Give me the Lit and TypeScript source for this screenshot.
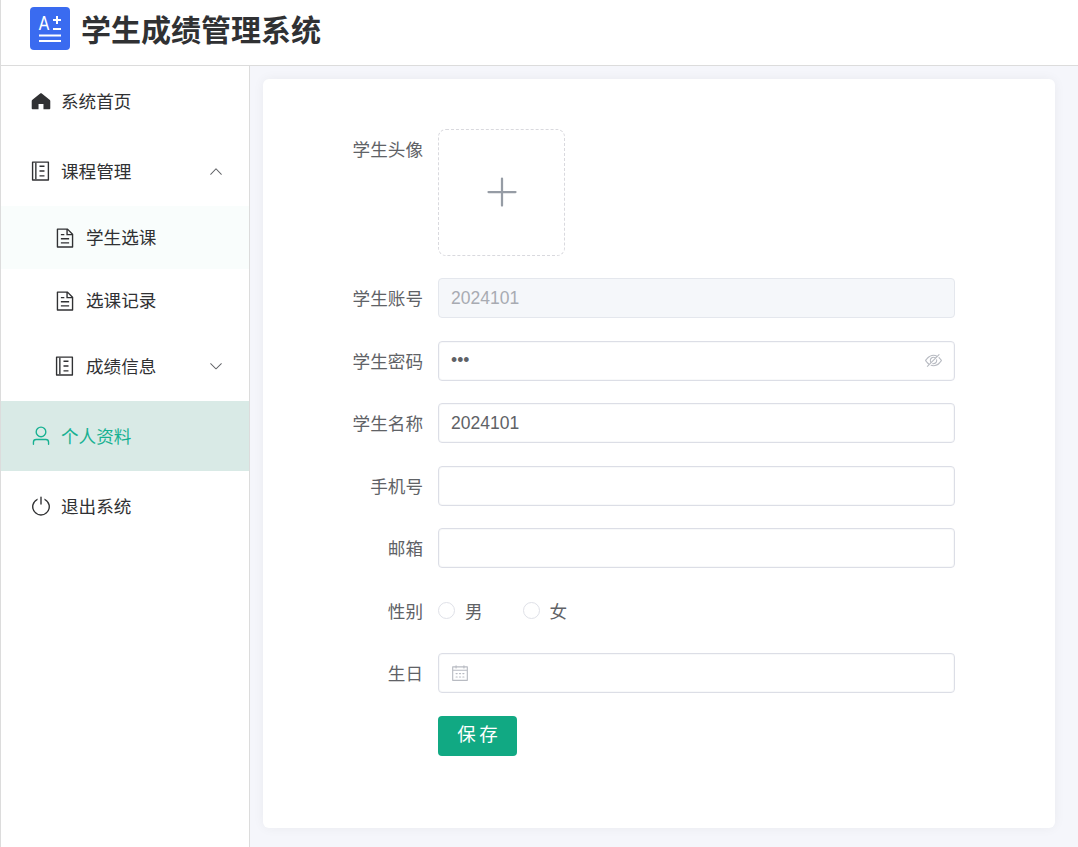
import { LitElement, html, css, svg } from "lit";
import { customElement } from "lit/decorators.js";

const P: Record<string, any> = {
  plus: svg`<path d="M480 480V128a32 32 0 0 1 64 0v352h352a32 32 0 1 1 0 64H544v352a32 32 0 1 1-64 0V544H128a32 32 0 0 1 0-64h352z"/>`,
  up: svg`<path d="M488.832 344.32l-339.84 356.672a32 32 0 0 0 0 44.16l.384.384a29.44 29.44 0 0 0 42.688 0l320-335.872 319.872 335.872a29.44 29.44 0 0 0 42.688 0l.384-.384a32 32 0 0 0 0-44.16L535.168 344.32a32 32 0 0 0-46.336 0z"/>`,
  down: svg`<path d="M831.872 340.864 512 652.672 192.128 340.864a30.592 30.592 0 0 0-42.752 0 29.12 29.12 0 0 0 0 41.6L489.664 714.24a32 32 0 0 0 44.672 0l340.288-331.712a29.12 29.12 0 0 0 0-41.728 30.592 30.592 0 0 0-42.752 0z"/>`,
  doc: svg`<path d="M832 384H576V128H192v768h640V384zm-26.496-64L640 154.496V320h165.504zM160 64h480l256 256v608a32 32 0 0 1-32 32H160a32 32 0 0 1-32-32V96a32 32 0 0 1 32-32zm160 448h384v64H320v-64zm0-192h160v64H320v-64zm0 384h384v64H320v-64z"/>`,
  book: svg`<path d="M120 64h736a32 32 0 0 1 32 32v832a32 32 0 0 1-32 32H120a32 32 0 0 1-32-32V96a32 32 0 0 1 32-32zm32 64v768h672V128H152z"/><path d="M240 128h64v768h-64zM442 256h232v64H442zM442 480h232v64H442zM442 704h232v64H442z"/>`,
  home: svg`<path d="M512 150c-14 0-27 5-38 14L100 470c-12 10-20 24-20 40v340c0 28 22 50 50 50h267V650h230v250h267c28 0 50-22 50-50V510c0-16-8-30-20-40L550 164c-11-9-24-14-38-14z"/>`,
  user: svg`<path d="M512 512a192 192 0 1 0 0-384 192 192 0 0 0 0 384zm0 64a256 256 0 1 1 0-512 256 256 0 0 1 0 512zm320 320v-96a96 96 0 0 0-96-96H288a96 96 0 0 0-96 96v96a32 32 0 1 1-64 0v-96a160 160 0 0 1 160-160h448a160 160 0 0 1 160 160v96a32 32 0 1 1-64 0z"/>`,
  power: svg`<path d="M352 159.872V230.4a352 352 0 1 0 320 0v-70.528A416.128 416.128 0 0 1 512 960a416 416 0 0 1-160-800.128z"/><path d="M512 64q32 0 32 32v320q0 32-32 32t-32-32V96q0-32 32-32z"/>`,
  hide: svg`<path d="M876.8 156.8c0-9.6-3.2-16-9.6-22.4-6.4-6.4-12.8-9.6-22.4-9.6-9.6 0-16 3.2-22.4 9.6L736 220.8c-64-32-137.6-51.2-224-60.8-160 16-288 73.6-377.6 176C44.8 438.4 0 496 0 512s48 73.6 134.4 176c22.4 25.6 44.8 48 73.6 67.2l-86.4 89.6c-6.4 6.4-9.6 12.8-9.6 22.4 0 9.6 3.2 16 9.6 22.4 6.4 6.4 12.8 9.6 22.4 9.6 9.6 0 16-3.2 22.4-9.6l704-710.4c3.2-6.4 6.4-12.8 6.4-22.4Zm-646.4 528c-76.8-70.4-128-128-153.6-172.8 28.8-48 80-105.6 153.6-172.8C304 272 400 230.4 512 224c64 3.2 124.8 19.2 176 44.8l-54.4 54.4C598.4 300.8 560 288 512 288c-64 0-115.2 22.4-160 64s-64 96-64 160c0 48 12.8 89.6 35.2 124.8L256 707.2c-9.6-6.4-19.2-16-25.6-22.4Zm140.8-96c-12.8-22.4-19.2-48-19.2-76.8 0-44.8 16-83.2 48-112 32-28.8 67.2-48 112-48 28.8 0 54.4 6.4 73.6 19.2L371.2 588.8ZM889.6 336c-12.8-16-28.8-28.8-41.6-41.6l-48 48c73.6 67.2 124.8 124.8 150.4 169.6-28.8 48-80 105.6-153.6 172.8-73.6 67.2-172.8 108.8-284.8 115.2-51.2-3.2-99.2-12.8-140.8-28.8l-48 48c57.6 22.4 118.4 38.4 188.8 44.8 160-16 288-73.6 377.6-176C979.2 585.6 1024 528 1024 512s-48-73.6-134.4-176Z"/><path d="M511.998 672c-12.8 0-25.6-3.2-38.4-6.4l-51.2 51.2c28.8 12.8 57.6 19.2 89.6 19.2 64 0 115.2-22.4 160-64 41.6-41.6 64-96 64-160 0-32-6.4-64-19.2-89.6l-51.2 51.2c3.2 12.8 6.4 25.6 6.4 38.4 0 44.8-16 83.2-48 112-32 28.8-67.2 48-112 48Z"/>`,
  cal: svg`<path d="M128 384v512h768V192H768v32a32 32 0 1 1-64 0v-32H320v32a32 32 0 0 1-64 0v-32H128v128h768v64H128zm192-256h384V96a32 32 0 1 1 64 0v32h160a32 32 0 0 1 32 32v768a32 32 0 0 1-32 32H96a32 32 0 0 1-32-32V160a32 32 0 0 1 32-32h160V96a32 32 0 0 1 64 0v32zm-32 384h64a32 32 0 0 1 0 64h-64a32 32 0 0 1 0-64zm0 192h64a32 32 0 1 1 0 64h-64a32 32 0 1 1 0-64zm192-192h64a32 32 0 0 1 0 64h-64a32 32 0 0 1 0-64zm0 192h64a32 32 0 1 1 0 64h-64a32 32 0 1 1 0-64zm192-192h64a32 32 0 1 1 0 64h-64a32 32 0 1 1 0-64zm0 192h64a32 32 0 1 1 0 64h-64a32 32 0 1 1 0-64z"/>`,
};

const icon = (n: string, cls = "") =>
  html`<svg class="ic ${cls}" viewBox="0 0 1024 1024" fill="currentColor">${P[n]}</svg>`;

@customElement("app-root")
export class AppRoot extends LitElement {
  static styles = css`
    :host {
      display: block;
      height: 847px;
      overflow: hidden;
      font-family: "Liberation Sans", "Noto Sans CJK SC", sans-serif;
      font-size: 17.6px;
      color: #303133;
      background: #fff;
    }
    .ic { display: block; flex: none; }
    .header {
      height: 65px;
      border-bottom: 1px solid #dcdcdc;
      border-left: 1px solid #dcdcdc;
      padding-left: 29px;
      display: flex;
      align-items: center;
      gap: 11px;
    }
    .logo { display: block; width: 40px; height: 43px; margin-top: -8px; }
    .title { font-size: 30px; font-weight: 700; color: #303133; line-height: 1; margin-top: -4px; }
    .body { display: flex; height: 781px; }
    .side {
      width: 248px;
      flex: none;
      border-left: 1px solid #dcdcdc;
      border-right: 1px solid #dcdcdc;
    }
    .item {
      height: 70px;
      display: flex;
      align-items: center;
      padding-left: 29px;
      gap: 9px;
      color: #303133;
    }
    .item .ic { width: 22px; height: 22px; }
    .item .txt { padding-bottom: 2px; }
    .item .sp { flex: 1; }
    .item .ar { width: 16px; height: 16px; color: #606266; margin-right: 25px; }
    .subs { padding-bottom: 1px; }
    .sub { padding-left: 53px; gap: 10px; }
    .h63 { height: 63px; }
    .h68 { height: 68px; }
    .sub.hl { background: #f9fdfc; }
    .item.active { background: #d9eae6; color: #17b192; }
    .main {
      flex: 1;
      background: #f5f6fb;
      padding: 13px 23px 19px 13px;
      display: flex;
    }
    .card {
      flex: 1;
      background: #fff;
      border-radius: 6px;
      box-shadow: 0 0 12px rgba(0, 0, 0, 0.05);
      padding-top: 50px;
    }
    .form {
      display: grid;
      grid-template-columns: 160px 517px;
      column-gap: 15px;
      row-gap: 22.5px;
    }
    .lab {
      text-align: right;
      color: #606266;
      height: 40px;
      line-height: 42px;
    }
    .upload {
      width: 125px;
      height: 124.9px;
      border: 1px dashed #d9d9de;
      border-radius: 8px;
      display: flex;
      align-items: center;
      justify-content: center;
      color: #969ca5;
    }
    .upload .ic { width: 36px; height: 36px; }
    .field {
      height: 38px;
      border: 1px solid #dcdee6;
      box-shadow: inset 0 0 0 1px rgba(220, 223, 230, 0.2);
      border-radius: 4px;
      display: flex;
      align-items: center;
      padding: 0 12px;
      background: #fff;
      gap: 10px;
    }
    .field.dis { background: #f5f7fa; border-color: #e4e7ed; box-shadow: none; }
    .field input {
      flex: 1;
      min-width: 0;
      border: 0;
      outline: 0;
      padding: 0;
      background: transparent;
      font: inherit;
      font-size: 17.5px;
      color: #606266;
      height: 100%;
    }
    .field.dis input { color: #a8abb2; -webkit-text-fill-color: #a8abb2; }
    .field .ic { width: 17px; height: 17px; color: #b8bbc2; }
    .field .ic.cal { width: 18px; height: 18px; }
    .radios { display: flex; align-items: center; height: 40px; color: #606266; }
    .radio { display: flex; align-items: center; gap: 10px; margin-right: 40px; }
    .radio .rt { padding-bottom: 1px; }
    .dot {
      width: 17px;
      height: 17px;
      border: 1px solid #dfe1e8;
      border-radius: 50%;
      box-sizing: border-box;
      background: #fff;
    }
    .btn {
      width: 79px;
      height: 40px;
      border: 0;
      border-radius: 4px;
      background: #11a983;
      color: #fff;
      font: inherit;
      font-size: 18.5px;
      letter-spacing: 3.5px;
      padding: 0 0 6px 0;
      text-indent: 3.5px;
    }
  `;

  render() {
    const T = (s: string) => html`<span class="txt">${s}</span>`;
    return html`
      <div class="header">
        <svg class="logo" viewBox="0 0 40 43">
          <rect width="40" height="43" rx="4" fill="#3a6bf0"/>
          <text transform="scale(.75 1)" x="11.6" y="23" font-family="Liberation Sans" font-size="21" fill="#fff">A</text>
          <path d="M27 9v8M23 13h8M23 22h8M9 28.5h22M9 34h22" stroke="#fff" stroke-width="2" fill="none"/>
        </svg>
        <div class="title">学生成绩管理系统</div>
      </div>
      <div class="body">
        <nav class="side">
          <div class="item">${icon("home")}${T("系统首页")}</div>
          <div class="item">${icon("book")}${T("课程管理")}<span class="sp"></span>${icon("up", "ar")}</div>
          <div class="subs">
            <div class="item sub hl h63">${icon("doc")}${T("学生选课")}</div>
            <div class="item sub h63">${icon("doc")}${T("选课记录")}</div>
            <div class="item sub h68">${icon("book")}${T("成绩信息")}<span class="sp"></span>${icon("down", "ar")}</div>
          </div>
          <div class="item active">${icon("user")}${T("个人资料")}</div>
          <div class="item">${icon("power")}${T("退出系统")}</div>
        </nav>
        <main class="main">
          <section class="card">
            <div class="form">
              <div class="lab">学生头像</div>
              <div class="upload">${icon("plus")}</div>
              <div class="lab">学生账号</div>
              <div class="field dis"><input disabled .value=${"2024101"} /></div>
              <div class="lab">学生密码</div>
              <div class="field"><input type="password" .value=${"123"} />${icon("hide")}</div>
              <div class="lab">学生名称</div>
              <div class="field"><input .value=${"2024101"} /></div>
              <div class="lab">手机号</div>
              <div class="field"><input /></div>
              <div class="lab">邮箱</div>
              <div class="field"><input /></div>
              <div class="lab">性别</div>
              <div class="radios">
                <label class="radio"><span class="dot"></span><span class="rt">男</span></label>
                <label class="radio"><span class="dot"></span><span class="rt">女</span></label>
              </div>
              <div class="lab">生日</div>
              <div class="field">${icon("cal", "cal")}<input /></div>
              <div></div>
              <div><button class="btn">保存</button></div>
            </div>
          </section>
        </main>
      </div>
    `;
  }
}
